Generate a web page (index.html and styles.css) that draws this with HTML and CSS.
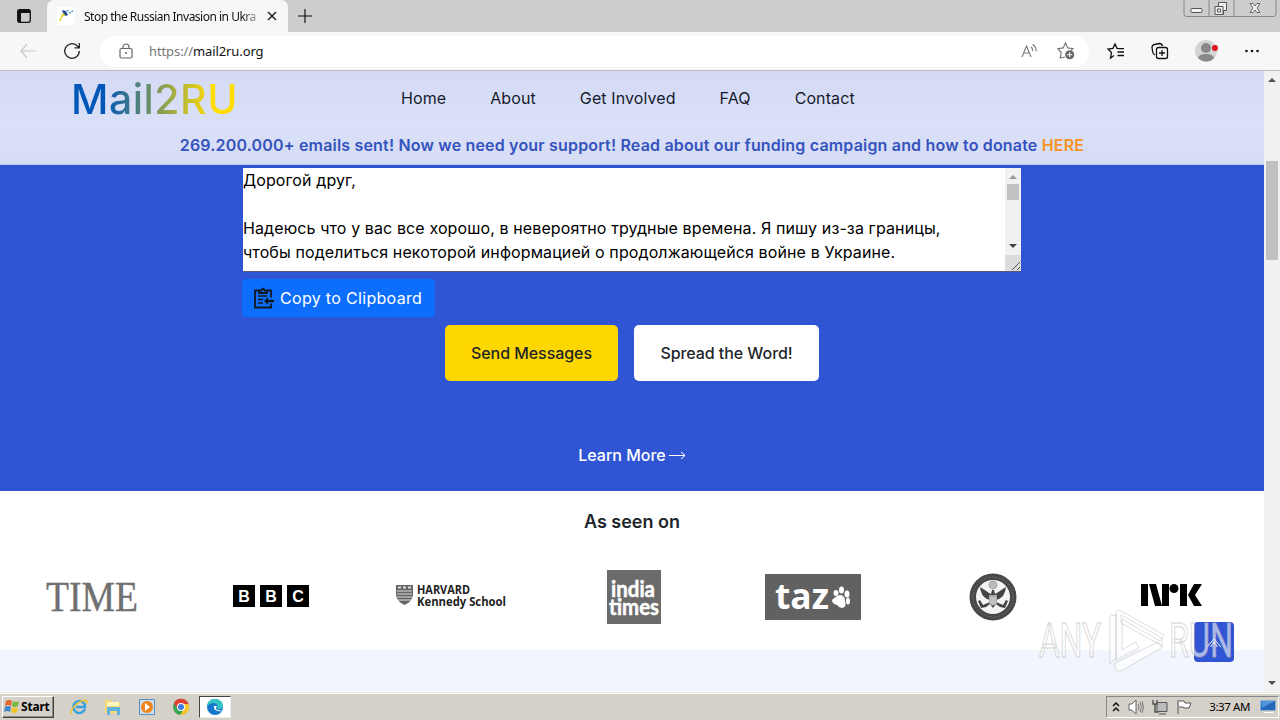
FILE: index.html
```html
<!DOCTYPE html>
<html lang="en">
<head>
    <meta charset="UTF-8">
    <meta name="viewport" content="width=device-width, initial-scale=1.0">
    <title>Stop the Russian Invasion in Ukraine</title>
    <link rel="stylesheet" href="styles.css">
</head>
<body>
    <!-- tab bar -->
    <div class="tabbar">
        <svg class="tab-menu" width="16" height="16" viewBox="0 0 16 16"><rect x="1.7" y="1.7" width="12.6" height="12.6" rx="2" fill="none" stroke="#111" stroke-width="1.3"/><path d="M2 2h12v3H2zM2 5h3v9H2z" fill="#111"/></svg>
        <div class="tab">
            <svg class="favicon" width="18" height="18" viewBox="0 0 18 18"><rect width="18" height="18" fill="#fff"/><path d="M2 14 5 7l5-1-2 3-3 1-1 4z" fill="#e8d63c"/><path d="m5 3 4 1 2 4-2 1-3-3z" fill="#23508e"/><path d="m10 3 3 3 4-3" fill="none" stroke="#4389c9" stroke-width="1.2" stroke-dasharray="2 1"/></svg>
            <span class="tab-title">Stop the Russian Invasion in Ukra</span>
            <svg width="10" height="10" viewBox="0 0 10 10"><path d="m1 1 8 8m0-8L1 9" stroke="#222" stroke-width="1.5"/></svg>
        </div>
        <svg class="new-tab" width="16" height="16" viewBox="0 0 16 16"><path d="M8 1v14M1 8h14" stroke="#111" stroke-width="1.2"/></svg>
        <svg class="win-buttons" width="94" height="18" viewBox="0 0 94 18">
            <path d="M1 0v14q0 2.500 2.500 2.500h87q2.500 0 2.500-2.500V0M26 0v16M51 0v16" fill="none" stroke="#888"/>
            <rect x="8" y="8.500" width="11" height="4" rx="1" fill="#f4f4f4" stroke="#555"/>
            <path d="M35.500 2.500h8v8h-3v4h-8.500v-8h3.500z" fill="#eee" stroke="#555"/><path d="M32 6.500h8v8M34.500 9h3v3h-3z" fill="none" stroke="#555"/>
            <path d="M67 3.500h3l2 2.500 2-2.500h3L74 8l3 4.500h-3L72 10l-2 2.500h-3L70 8z" fill="#eee" stroke="#666"/>
        </svg>
    </div>
    <!-- address bar -->
    <div class="toolbar">
        <svg class="back" width="18" height="16" viewBox="0 0 18 16"><path d="M8 1 2 8l6 7M2 8h15" fill="none" stroke="#c8c8c8" stroke-width="1.200"/></svg>
        <svg class="reload" width="18" height="18" viewBox="0 0 18 18"><path d="M16.300 9a7.300 7.300 0 1 1-2.500-5.500L16 5.500M16.300 1v4.800h-4.800" fill="none" stroke="#222" stroke-width="1.300"/></svg>
        <div class="address">
            <svg width="14" height="16" viewBox="0 0 14 16"><path d="M2.500 5.500h9q1.500 0 1.500 1.500v6.500q0 1.500-1.500 1.500h-9Q1 15 1 13.500V7q0-1.500 1.500-1.500zM4 5.500V4a3 3 0 0 1 6 0v1.500" fill="none" stroke="#666" stroke-width="1.200"/><circle cx="7" cy="10" r="1" fill="#666"/></svg>
            <span class="url"><span>https://</span>mail2ru.org</span>
            <svg class="read" width="16" height="16" viewBox="0 0 16 16"><path d="m1 14 4.500-11L10 14M2.700 10h5.700M10 4q2 1.500 1.500 4M11.500 1.500q4 2 3.500 7" fill="none" stroke="#777" stroke-width="1.100"/></svg>
            <svg width="18" height="18" viewBox="0 0 18 18"><path d="m8 15-4.800 1 1-5.500L1 6.700l5.200-.8L8.500 1l2.300 4.900 5.200.8-2 2" fill="none" stroke="#777" stroke-width="1.200"/><circle cx="12.700" cy="12.700" r="4.500" fill="#666"/><path d="M12.700 10.200v5M10.200 12.700h5" stroke="#fff"/></svg>
        </div>
        <svg class="favs" width="18" height="18" viewBox="0 0 18 18"><path d="M7 13.500 3.500 16l1-5.500L1 7l5-.7L8 2l2 4.300 3 .4h4M10.500 10H17M10.500 13.500H17" fill="none" stroke="#111" stroke-width="1.300"/></svg>
        <svg class="collections" width="18" height="18" viewBox="0 0 18 18"><path d="M4 13q-2-1-2.300-3L1 5.500Q1 3 3.500 2.500l5-1q2.500 0 3 2.500M7.500 5.500h7q2 0 2 2v7q0 2-2 2h-7q-2 0-2-2v-7q0-2 2-2M11 8v6M8 11h6" fill="none" stroke="#111" stroke-width="1.300"/></svg>
        <svg class="profile" width="24" height="24" viewBox="0 0 24 24"><circle cx="11" cy="12" r="11" fill="#d3d3d1"/><circle cx="11" cy="9" r="5" fill="#888"/><path d="M3 19q1-4 8-4t8 4q-7 7-16 0" fill="#888"/><circle cx="20" cy="9" r="3" fill="#dc1220"/></svg>
        <svg width="14" height="4" viewBox="0 0 14 4"><g fill="#111"><circle cx="1.500" cy="2" r="1.300"/><circle cx="7" cy="2" r="1.300"/><circle cx="12.500" cy="2" r="1.300"/></g></svg>
    </div>

    <div class="viewport">
        <div class="page">
            <header class="header">
                <div class="nav-row">
                    <div class="brand">Mail2RU</div>
                    <nav class="nav">
                        <a>Home</a>
                        <a>About</a>
                        <a>Get Involved</a>
                        <a>FAQ</a>
                        <a>Contact</a>
                    </nav>
                </div>
                <p class="notice">269.200.000+ emails sent! Now we need your support! Read about our funding campaign and how to donate <a>HERE</a></p>
            </header>
            <section class="hero">
                <div class="message">
                    <div class="message-text">Дорогой друг,<br><br>Надеюсь что у вас все хорошо, в невероятно трудные времена. Я пишу из-за границы,<br>чтобы поделиться некоторой информацией о продолжающейся войне в Украине.</div>
                    <svg class="message-scroll" width="16" height="103" viewBox="0 0 16 103"><path d="M0 0h16v103H0z" fill="#f1f1f1"/><path d="M4 11h8L8 7z" fill="#999"/><path d="M2 16h12v16H2z" fill="#c1c1c1"/><path d="M4 76h8l-4 4z" fill="#444"/><path d="M0 87h16v16H0z" fill="#dcdcdc"/><path d="m7 102 8-8m-3 8 3-3" stroke="#555"/></svg>
                </div>
                <button class="copy">
                    <svg width="22" height="22" viewBox="0 0 22 22"><path d="M6 3.500H2v17h16v-4M14 3.500h4v7M6 6V3.500h2.500q1.500-4 3 0H14V6z" fill="none" stroke="#101820" stroke-width="1.800"/><path d="M5 9h9M5 12.500h5M5 16h5" stroke="#101820" stroke-width="1.300"/><path d="m11 14 4-4v2.700h6v2.600h-6V18z" fill="#101820"/></svg>
                    <span>Copy to Clipboard</span>
                </button>
                <div class="actions">
                    <button class="btn btn-send">Send Messages</button>
                    <button class="btn btn-spread">Spread the Word!</button>
                </div>
                <a class="learn"><span>Learn More</span><svg width="17" height="9" viewBox="0 0 17 9"><path d="M0 4.500h16M12 1l4 3.500L12 8" fill="none" stroke="#fff"/></svg></a>
            </section>
            <section class="seen">
                <h2>As seen on</h2>
                <div class="logos">
                    <svg class="time" width="94" height="48" viewBox="0 0 94 48"><text x="1" y="38" textLength="92" lengthAdjust="spacingAndGlyphs" font-family="Liberation Serif, serif" font-size="43" fill="#707070" stroke="#707070" stroke-width=".4">TIME</text></svg>
                    <svg width="76" height="23" viewBox="0 0 76 23"><path d="M0 0h22v22H0zM27 0h22v22H27zM54 0h22v22H54z"/><g fill="#fff" font-family="Liberation Sans, sans-serif" font-size="16" font-weight="bold" text-anchor="middle"><text x="11" y="17">B</text><text x="38" y="17">B</text><text x="65" y="17">C</text></g></svg>
                    <svg width="112" height="34" viewBox="0 -4 112 34"><path d="M1 1h17v10q-1 7-8.500 10Q2 18 1 11z" fill="#666"/><path d="M2 7h15M2 10h15M2 13h15M3 16h13" stroke="#ddd"/><path d="M3 3.500h3m2 0h3m2 0h3" stroke="#ddd" stroke-width="2"/><g font-family="Open Sans, sans-serif" font-weight="bold" fill="#222"><text x="22" y="10" font-size="11.500" textLength="53" lengthAdjust="spacingAndGlyphs">HARVARD</text><text x="22" y="22" font-size="11.500" textLength="89" lengthAdjust="spacingAndGlyphs">Kennedy School</text></g></svg>
                    <svg class="india" width="54" height="54" viewBox="0 0 54 54"><path d="M0 0h54v54H0z" fill="#6b6b6b"/><g fill="#fff" stroke="#fff" stroke-width=".5" font-family="Lato, sans-serif" font-weight="bold" font-size="22"><text x="4" y="27" textLength="44" lengthAdjust="spacingAndGlyphs">india</text><text x="2" y="45" textLength="50" lengthAdjust="spacingAndGlyphs">times</text></g></svg>
                    <svg class="taz" width="96" height="46" viewBox="0 0 96 46"><path d="M0 0h96v46H0z" fill="#616161"/><text x="10" y="35" font-family="Open Sans, sans-serif" font-size="35" font-weight="bold" fill="#fff" textLength="54" lengthAdjust="spacingAndGlyphs">taz</text><g fill="#fff"><path d="M67 26q5-5 9-5 4 1 4 6 2 6-3 7-3 0-5-3-5-1-5-5z"/><ellipse cx="71" cy="19" rx="2.500" ry="3"/><ellipse cx="76.500" cy="16" rx="2.500" ry="3.500"/><ellipse cx="82" cy="20" rx="2.500" ry="3.500"/><ellipse cx="83" cy="27" rx="2" ry="3.500"/></g></svg>
                    <svg width="48" height="48" viewBox="0 0 48 48"><circle cx="24" cy="24" r="23.500" fill="#484848"/><circle cx="24" cy="24" r="20" fill="none" stroke="#888" stroke-dasharray="1 2"/><circle cx="24" cy="24" r="17" fill="#f4f4f4"/><circle cx="24" cy="12" r="4" fill="#bbb" stroke="#777" stroke-dasharray="1 1"/><path d="M11 14q5 3 9 6l2 1 1-4h2l1 4 2-1q4-3 9-6-1 9-7 12l-3 1v2l7 3 3-5 2 1-3 7-5-1-4-3-3 4-3-4-4 3-5 1-3-7 2-1 3 5 7-3v-2l-3-1q-6-3-7-12z" fill="#444"/><path d="M20 22h8v8q-4 5-8 0z" fill="#aaa"/><path d="M22 24v7m2-7v8m2-8v7" stroke="#eee" stroke-width=".7"/></svg>
                    <svg class="nrk" width="62" height="22" viewBox="0 0 62 22"><path d="M0 0h7v22H0zM8 0h7l6 22h-7zM21 0h7v22h-7zM39 0h7v22h-7zM53 0h8l-7 11 7 11h-8l-6-11z"/><circle cx="33" cy="4.500" r="4.500"/></svg>
                </div>
            </section>
            <section class="next"></section>
            <svg class="to-top" width="40" height="40" viewBox="0 0 40 40"><rect width="40" height="40" rx="4" fill="#2f55d4"/><path d="m13 25 7-8 7 8M16.500 25l3.500-5 3.500 5" fill="none" stroke="#fff"/></svg>
            <svg class="watermark" width="204" height="72" viewBox="0 0 204 72">
                <g fill="#fff" fill-opacity=".6" stroke="#aaa" stroke-opacity=".4" stroke-width="1.500" font-family="Roboto, sans-serif" font-size="48"><text x="5" y="51" textLength="62" lengthAdjust="spacingAndGlyphs">ANY</text><text x="135" y="51" textLength="64" lengthAdjust="spacingAndGlyphs">RUN</text></g>
                <path d="M76 58V10l6-1v42l-6 7zM87 9l41 23v8L87 17zM82 8q0-5 5-3l43 24-4 6L88 13v31l14-8 3 6-23 12zM81 57l43-21 5 5-42 24q-6 1-6-4z" fill="#fff" fill-opacity=".65" stroke="#aaa" stroke-opacity=".4" stroke-linejoin="round"/>
            </svg>
        </div>
        <svg class="page-scroll" width="16" height="621" viewBox="0 0 16 621"><path d="M0 0h16v621H0z" fill="#f1f1f1"/><path d="M4 11h8L8 7zM4 610h8l-4 4z" fill="#505050"/><path d="M2 90h12v99H2z" fill="#c1c1c1"/></svg>
    </div>

    <!-- taskbar -->
    <div class="taskbar">
        <div class="start">
            <svg width="15" height="16" viewBox="0 0 15 16"><path d="M2 2q3-2 6 0L7 7Q4 5 1 7z" fill="#e9642c"/><path d="M9 2q3 2 6 0l-1 5q-3 2-6 0z" fill="#78b743"/><path d="M1 8q3-2 6 0l-1 5q-3-2-6 0z" fill="#3e87cf"/><path d="M8 8q3 2 6 0l-1 5q-3 2-6 0z" fill="#f4c42d"/></svg>
            <b>Start</b>
        </div>
        <div class="apps">
            <svg width="18" height="18" viewBox="0 0 18 18"><path d="M15 11a6 6 0 1 1-.2-4.500L15 9H6" fill="none" stroke="#3aa1df" stroke-width="2.500"/><path d="M2 16C-2 13 8 3 15 2q3 0 1 4" fill="none" stroke="#ecc52e" stroke-width="1.500"/></svg>
            <svg width="18" height="18" viewBox="0 0 18 18"><path d="M1 2h6l1 2h8v11H1z" fill="#f3d873"/><path d="M3 4h12v4H3z" fill="#fff6bf"/><path d="M3 9h13v8h-3v-4H6v4H3z" fill="#62b2de"/></svg>
            <svg width="18" height="18" viewBox="0 0 18 18"><path d="M1.500 1.500h15v15h-15z" fill="#cbdff0" stroke="#5b8ebb"/><circle cx="9" cy="9" r="6" fill="#ef8418"/><path d="m7 5 5 4-5 4z" fill="#fff"/></svg>
            <svg width="18" height="18" viewBox="0 0 18 18"><circle cx="9" cy="9" r="8" fill="#35a652"/><path d="M2 5a8 8 0 0 1 14.500 1H9L5.500 11z" fill="#df4034"/><path d="M16.500 6A8 8 0 0 1 8 17l4-6V6z" fill="#f6c72d"/><circle cx="9" cy="9" r="4" fill="#fff"/><circle cx="9" cy="9" r="3" fill="#3c7be1"/></svg>
            <div class="app-active"><svg width="18" height="18" viewBox="0 0 18 18"><circle cx="9" cy="9" r="8" fill="#1678ca"/><path d="M1 8q1-7 8-7 8 1 8 7-1 4-6 3 2-5-3-6-4 0-7 3z" fill="#35c3c3"/><path d="M8 8q-1 6 8 5-2-1-5-1-2-2 0-4z" fill="#fff"/></svg></div>
        </div>
        <div class="tray">
            <svg width="8" height="12" viewBox="0 0 8 12"><path d="m1 5 3-3 3 3M1 10l3-3 3 3" fill="none" stroke="#111" stroke-width="1.500"/></svg>
            <svg width="16" height="16" viewBox="0 0 16 16"><path d="M1 5h3l4-4v14l-4-4H1z" fill="#fff" stroke="#666"/><path d="M10 5q2 3 0 6m2-8q3 5 0 10m2-11q3 6 0 12" fill="none" stroke="#777"/></svg>
            <svg width="16" height="16" viewBox="0 0 16 16"><path d="M5 3.500h10v9H5zM7 15h7" fill="#bbb" stroke="#555"/><path d="M1 1v4h4V1M3 5v8h4" fill="none" stroke="#555" stroke-width="1.500"/></svg>
            <svg width="17" height="16" viewBox="0 0 17 16"><path d="M2 15V1m1 1h5l1 2h6l-2 5H8L7 8H3" fill="#fff" stroke="#555"/></svg>
            <span class="clock">3:37 AM</span>
            <svg width="16" height="14" viewBox="0 0 16 14"><path d="M.5.5h15v10H.5z" fill="#2466b8" stroke="#8eb1d5"/><path d="M1 1h14L2 8z" fill="#4f95dc"/><path d="M4 12.500h9" stroke="#fff"/></svg>
        </div>
    </div>
</body>
</html>
```

FILE: styles.css
```css
*{
    box-sizing: border-box;
    margin: 0;
    padding: 0;
}
body{
    width: 1280px;
    height: 720px;
    overflow: hidden;
    display: flex;
    flex-direction: column;
    font-family: Inter, "Liberation Sans", sans-serif;
    font-size: 16px;
}
svg{
    display: block;
    flex-shrink: 0;
}
button{
    border: 0;
    font: inherit;
}
.tabbar{
    height: 32px;
    background: #cdcdcd;
    display: flex;
    align-items: center;
    flex-shrink: 0;
}
.tab-menu{
    margin-left: 16px;
}
.tab{
    width: 241px;
    height: 32px;
    margin-left: 15px;
    padding: 0 10px;
    display: flex;
    align-items: center;
    background: #f7f7f7;
    border-radius: 7px 7px 0 0;
}
.tab-title{
    width: 175px;
    margin: 0 8px 0 9px;
    font-family: "Noto Sans", sans-serif;
    font-size: 12px;
    letter-spacing: -0.5px;
    white-space: nowrap;
    background: linear-gradient(90deg, #111 90%, #bbb);
    background-clip: text;
    -webkit-background-clip: text;
    color: transparent;
}
.new-tab{
    margin-left: 9px;
}
.win-buttons{
    margin: 0 3px 0 auto;
    align-self: flex-start;
}
.toolbar{
    height: 39px;
    background: #f7f7f7;
    border-bottom: 1px solid #b9bcc6;
    display: flex;
    align-items: center;
    flex-shrink: 0;
}
.back{
    margin-left: 19px;
}
.reload{
    margin-left: 26px;
}
.address{
    width: 989px;
    height: 31px;
    margin-left: 19px;
    padding: 0 14px 0 19px;
    background: #fff;
    border-radius: 16px;
    display: flex;
    align-items: center;
}
.url{
    margin-left: 16px;
    font-family: "Noto Sans", sans-serif;
    font-size: 13px;
    letter-spacing: -0.1px;
    color: #111;
}
.url span{
    color: #777;
}
.read{
    margin: 0 20px 0 auto;
}
.favs{
    margin-left: 18px;
}
.collections{
    margin-left: 26px;
}
.profile{
    margin: 0 26px;
}
.viewport{
    height: 621px;
    display: flex;
    flex-shrink: 0;
}
.page{
    position: relative;
    width: 1264px;
    display: flex;
    flex-direction: column;
}
.header{
    height: 94px;
    background: linear-gradient(#d5daf5, #dae0f7 60%, #d6dcf5);
    border-bottom: 1px solid #b5cafa;
}
.nav-row{
    height: 54px;
    display: flex;
    align-items: center;
    padding-left: 71px;
}
.brand{
    width: 166px;
    padding-top: 2px;
    font-size: 41px;
    font-weight: 500;
    letter-spacing: 0.5px;
    line-height: 54px;
    white-space: nowrap;
    background: linear-gradient(90deg, #0057b8 20%, #ffdd00 85%);
    background-clip: text;
    -webkit-background-clip: text;
    color: transparent;
}
.nav{
    margin-left: 164px;
    display: flex;
    gap: 44px;
    letter-spacing: 0.1px;
    color: #161c2d;
}
.notice{
    padding-top: 8px;
    text-align: center;
    font-weight: 600;
    letter-spacing: 0.18px;
    line-height: 24px;
    color: #3553bd;
    white-space: nowrap;
}
.notice a{
    color: #f7931e;
}
.hero{
    height: 326px;
    padding-top: 3px;
    background: #2f55d4;
    display: flex;
    flex-direction: column;
    color: #fff;
}
.message{
    width: 778px;
    height: 103px;
    margin-left: 243px;
    background: #fff;
    display: flex;
    color: #000;
    box-shadow: 0 1px #555b78;
}
.message-text{
    width: 762px;
    line-height: 24px;
    letter-spacing: 0.11px;
    white-space: nowrap;
}
.copy{
    width: 193px;
    height: 38px;
    margin: 8px 0 0 242px;
    padding: 0 0 1px 11px;
    background: #0d6efd;
    border-radius: 4px;
    color: #fff;
    display: flex;
    align-items: center;
    gap: 5px;
    letter-spacing: 0.32px;
    white-space: nowrap;
}
.actions{
    display: flex;
    justify-content: center;
    gap: 16px;
    margin-top: 8px;
}
.btn{
    height: 56px;
    border-radius: 5px;
    font-weight: 500;
    letter-spacing: -0.06px;
    color: #212529;
    white-space: nowrap;
}
.btn-send{
    width: 173px;
    background: #ffd700;
}
.btn-spread{
    width: 185px;
    background: #fff;
}
.learn{
    margin-top: 62px;
    display: flex;
    justify-content: center;
    align-items: center;
    gap: 3px;
    font-weight: 500;
    line-height: 24px;
}
.seen{
    height: 159px;
    background: #fff;
}
.seen h2{
    padding-top: 17px;
    text-align: center;
    font-size: 18px;
    font-weight: 600;
    line-height: 27px;
    color: #212529;
}
.logos{
    height: 101px;
    display: grid;
    grid-template-columns: repeat(7, 1fr);
    align-items: center;
    justify-items: center;
    padding-top: 22px;
}
.time{
    margin-left: 4px;
}
.india{
    margin-left: 5px;
}
.nrk{
    margin: 0 3px 4px 0;
}
.next{
    flex: 1;
    background: #f3f5fe;
}
.to-top{
    position: absolute;
    right: 30px;
    bottom: 30px;
}
.watermark{
    position: absolute;
    right: 26px;
    bottom: 14px;
}
.taskbar{
    height: 28px;
    flex-shrink: 0;
    background: #d5d0c8;
    border-top: 1px solid #e9e7e2;
    box-shadow: inset 0 1px #fff;
    display: flex;
    align-items: center;
}
.start{
    width: 52px;
    height: 22px;
    margin-left: 2px;
    display: flex;
    align-items: center;
    border: 1px solid;
    border-color: #fff #444 #444 #fff;
    font-family: "Noto Sans", sans-serif;
    font-size: 12px;
    gap: 2px;
    letter-spacing: -0.2px;
    padding-left: 1px;
    box-shadow: inset -1px -1px #888;
}
.apps{
    display: flex;
    align-items: center;
    gap: 16px;
    margin-left: 16px;
}
.app-active{
    width: 32px;
    height: 22px;
    margin-left: -7px;
    padding-left: 6px;
    background: #fff;
    border: 1px solid;
    border-color: #444 #eee #eee #444;
    display: flex;
    align-items: center;
}
.tray{
    width: 173px;
    height: 22px;
    margin: 0 1px 0 auto;
    padding: 0 2px 0 5px;
    border: 1px solid;
    border-color: #888 #fff #fff #888;
    display: flex;
    align-items: center;
    gap: 8px;
}
.clock{
    margin: 0 0 0 auto;
    padding-right: 2px;
    font-family: "Noto Sans", sans-serif;
    font-size: 11.5px;
    letter-spacing: -0.4px;
    white-space: nowrap;
}
```
